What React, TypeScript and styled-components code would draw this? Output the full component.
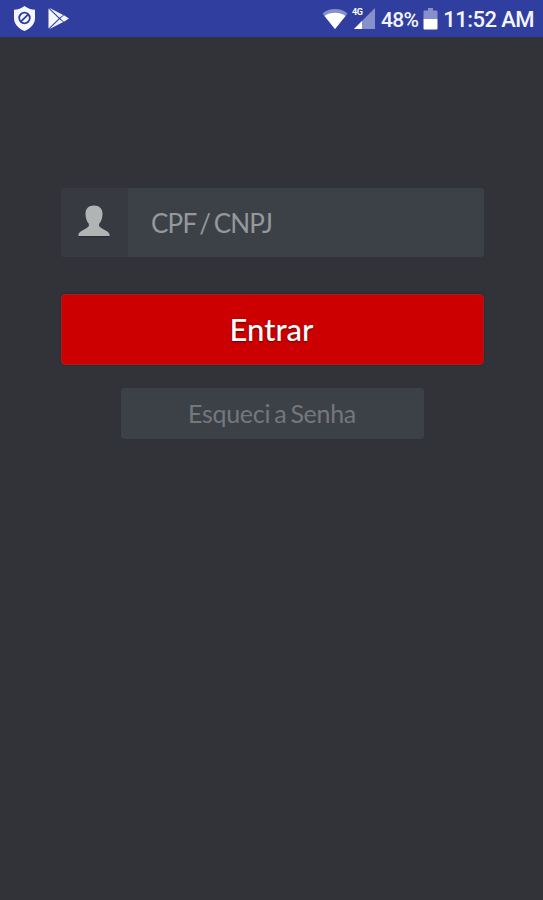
import React from "react";
import styled, { createGlobalStyle } from "styled-components";

const GlobalStyle = createGlobalStyle`
  *, *::before, *::after { box-sizing: border-box; }
  body { margin: 0; background: #323338; }
`;

const Screen = styled.div`
  display: flex;
  flex-direction: column;
  width: 100%;
  min-height: 100vh;
  background: #323338;
  font-family: Lato, "Open Sans", sans-serif;
`;

const StatusBar = styled.header`
  display: flex;
  justify-content: space-between;
  height: 37px;
  padding: 0 9px 0 13px;
  background: #303f9f;
  color: #f4f5ff;
  font-family: Roboto, sans-serif;
`;

const StatusGroup = styled.div<{ $gap?: number }>`
  display: flex;
  align-items: center;
  gap: ${({ $gap = 0 }) => $gap}px;
  svg { display: block; flex: none; }
`;

const StatusText = styled.span<{ $size: number; $spacing?: number }>`
  margin: 0 5px;
  padding-top: 2px;
  font-size: ${({ $size }) => $size}px;
  font-weight: 500;
  line-height: 24px;
  letter-spacing: ${({ $spacing = 0 }) => $spacing}px;
  white-space: nowrap;
  &:last-child { margin-right: 0; }
`;

const Form = styled.form`
  display: flex;
  flex-direction: column;
  align-items: center;
  padding: 151px 59px 0 61px;
`;

const Field = styled.label`
  display: flex;
  width: 100%;
  height: 69px;
  border-radius: 4px;
  overflow: hidden;
  background: #3c4148;
`;

const FieldIcon = styled.span`
  display: flex;
  align-items: center;
  justify-content: center;
  width: 67px;
  padding: 0 2px 3px 0;
  background: #373b41;
`;

const Input = styled.input`
  flex: 1;
  min-width: 0;
  padding: 0 23px;
  border: 0;
  outline: 0;
  background: transparent;
  color: #c8c9cb;
  font: 400 26px Lato, sans-serif;
  letter-spacing: -0.75px;
  word-spacing: -2.5px;
  &::placeholder { color: #96989b; opacity: 1; }
`;

const SubmitButton = styled.button`
  width: 100%;
  height: 71px;
  margin-top: 37px;
  padding: 0 2px 2px 0;
  border: 1px solid #a51d20;
  border-radius: 4px;
  background: #cc0000;
  box-shadow: 0 0 1px 1px #24303a;
  color: #fff;
  font: 500 31px Lato, sans-serif;
  text-shadow: 0 1px 2px rgba(60, 0, 0, 0.7);
`;

const ForgotButton = styled.button`
  width: 303px;
  height: 51px;
  margin-top: 23px;
  padding: 0 1px 1px 0;
  border: 0;
  border-radius: 4px;
  background: #3c4148;
  color: #74777c;
  font: 400 25px Lato, sans-serif;
  letter-spacing: -0.3px;
  word-spacing: -2px;
`;

const ShieldIcon = () => (
  <svg width="23" height="27" viewBox="0 0 23 27">
    <path d="M11.5 1C8.5 3.5 5 4.6 1 4.8V13c0 6 4.2 10.4 10.5 13C17.8 23.4 22 19 22 13V4.8C18 4.6 14.5 3.5 11.5 1Z" fill="#f7f8ff" />
    <circle cx="11.5" cy="13" r="5.3" fill="none" stroke="#303f9f" strokeWidth="1.8" />
    <path d="M7.8 16.7 15.2 9.3" stroke="#303f9f" strokeWidth="1.8" />
  </svg>
);

const PlayIcon = () => (
  <svg width="22" height="24" viewBox="0 0 22 24">
    <path d="M.5 1.5v20L10.7 11.5Z" fill="#f7f8ff" />
    <path d="M1.2.8 11.5 10.800 15.200 7.900ZM1.200 22.200 11.500 12.200 15.200 15.100ZM12.300 11.500 15.900 8.300 21 11.500 15.900 14.700Z" fill="#f0f2fc" />
  </svg>
);

const WifiIcon = () => (
  <svg width="26" height="22" viewBox="0 0 26 22">
    <path d="M.5 5.5C7.5-.4 18.5-.4 25.5 5.5L13 21Z" fill="#8790cb" />
    <path d="M2.5 8C8.5 3.700 17.500 3.700 23.500 8L13 21Z" fill="#fff" />
  </svg>
);

const SignalIcon = () => (
  <svg width="24" height="23" viewBox="0 0 24 23">
    <path d="M23 1v21H2Z" fill="#8790cb" />
    <path d="M10 14v8H2Z" fill="#fff" />
    <text x="0" y="8" fill="#fff" fontFamily="Roboto, sans-serif" fontSize="9" fontWeight="700" letterSpacing="-.3">4G</text>
  </svg>
);

const BatteryIcon = () => (
  <svg width="15" height="22" viewBox="0 0 15 22">
    <path d="M5 0h5v2.5h3.5q1 0 1 1V11H.5V3.500q0-1 1-1H5Z" fill="#8790cb" />
    <path d="M.5 11h14v9.500q0 1-1 1h-12q-1 0-1-1Z" fill="#fff" />
  </svg>
);

const UserIcon = () => (
  <svg width="32" height="34" viewBox="0 0 32 34">
    <path d="M16 1.5c-5.300 0-8.700 3.300-8.500 8.500.1 4 1.100 7.300 3.300 9.800.4 1.700.1 2.900-1.400 3.800-3 2-6.600 3.700-8.300 5.300-.6.600-.7 2-.7 3.100h31.200c0-1.100-.1-2.500-.7-3.100-1.700-1.600-5.300-3.300-8.300-5.300-1.500-.9-1.800-2.100-1.400-3.800 2.200-2.500 3.200-5.800 3.300-9.800.2-5.200-3.200-8.500-8.500-8.500Z" fill="#b2b3b4" />
    <path d="M1 32.7h30" stroke="#2b2e32" strokeWidth="1.3" />
  </svg>
);

export default function App() {
  return (
    <Screen>
      <GlobalStyle />
      <StatusBar>
        <StatusGroup $gap={12}>
          <ShieldIcon />
          <PlayIcon />
        </StatusGroup>
        <StatusGroup>
          <StatusGroup $gap={4}>
            <WifiIcon />
            <SignalIcon />
          </StatusGroup>
          <StatusText $size={21} $spacing={-0.7}>48%</StatusText>
          <BatteryIcon />
          <StatusText $size={22} $spacing={-0.55}>11:52 AM</StatusText>
        </StatusGroup>
      </StatusBar>
      <Form onSubmit={(event) => event.preventDefault()}>
        <Field>
          <FieldIcon><UserIcon /></FieldIcon>
          <Input type="text" placeholder="CPF / CNPJ" aria-label="CPF / CNPJ" />
        </Field>
        <SubmitButton type="submit">Entrar</SubmitButton>
        <ForgotButton type="button">Esqueci a Senha</ForgotButton>
      </Form>
    </Screen>
  );
}
